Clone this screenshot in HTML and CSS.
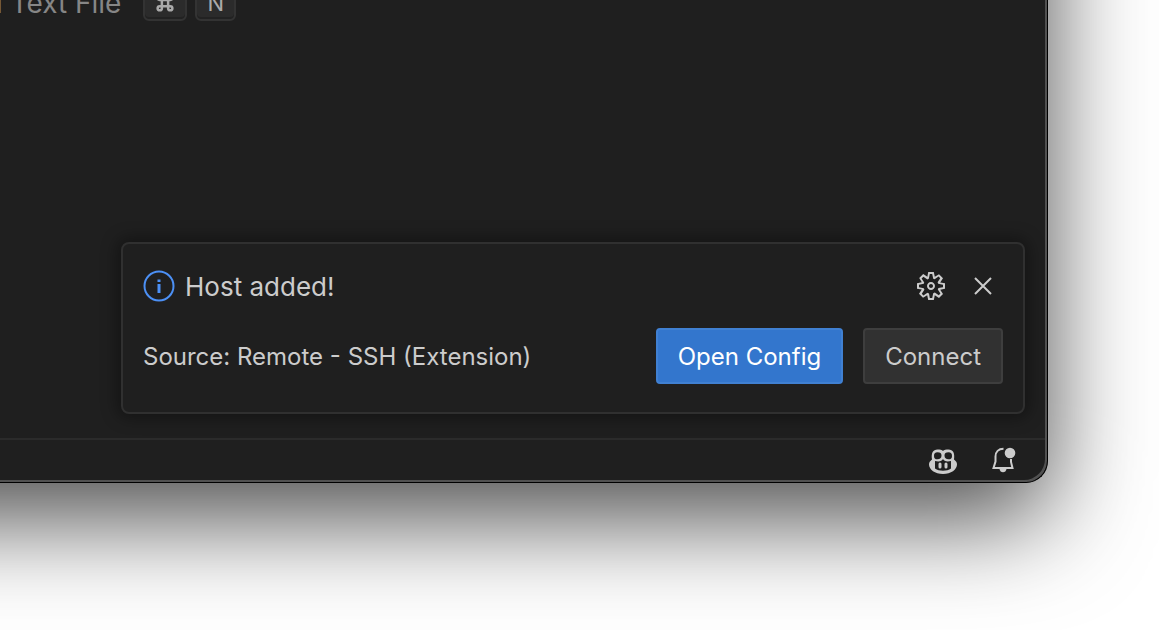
FILE: index.html
```html
<!DOCTYPE html>
<html lang="en">
<head>
<meta charset="utf-8">
<title>Host added</title>
<link rel="stylesheet" href="styles.css">
</head>
<body>
<div class="window">
  <main class="editor">
    <div class="shortcut">
      <span class="shortcut-label">New Untitled Text File</span>
      <kbd class="key"><svg width="20" height="20" viewBox="0 0 16 16" aria-label="Command"><path d="M5.500 5.500h5v5h-5zM5.500 5.500V3.800a1.700 1.700 0 1 0-1.700 1.700zM10.500 5.500V3.800a1.700 1.700 0 1 1 1.700 1.700zM5.500 10.500v1.700a1.700 1.700 0 1 1-1.700-1.700zM10.500 10.500v1.700a1.700 1.700 0 1 0 1.700-1.700z"/></svg></kbd>
      <kbd class="key">N</kbd>
    </div>
    <section class="toast" role="status">
      <div class="toast-row">
        <svg class="info" width="32" height="32" viewBox="0 0 32 32" aria-hidden="true"><circle cx="16" cy="16" r="14.500"/><path d="M14.500 9.500h3v2.500h-3zM14.500 14h3v9h-3z"/></svg>
        <span class="message">Host added!</span>
        <button class="icon-button" aria-label="Configure notification"><svg width="32" height="32" viewBox="0 0 16 16"><path fill-rule="evenodd" d="M9.100 4.400L8.600 2H7.400l-.5 2.400-.7.3-2-1.300-.9.8 1.300 2-.2.7-2.400.5v1.200l2.400.5.3.8-1.300 2 .8.8 2-1.300.8.3.4 2.300h1.200l.5-2.400.8-.3 2 1.300.8-.8-1.300-2 .3-.8 2.300-.4V7.400l-2.400-.5-.3-.8 1.300-2-.8-.8-2 1.300-.7-.2zM9.400 1l.5 2.400L12 2.100l2 2-1.400 2.100 2.400.4v2.800l-2.400.5L14 12l-2 2-2.100-1.400-.5 2.400H6.600l-.5-2.400L4 13.900l-2-2 1.400-2.100L1 9.400V6.600l2.400-.5L2.100 4l2-2 2.100 1.400.4-2.400h2.800zm.6 7c0 1.100-.9 2-2 2s-2-.9-2-2 .9-2 2-2 2 .9 2 2zM8 9c.6 0 1-.4 1-1s-.4-1-1-1-1 .4-1 1 .4 1 1 1z"/></svg></button>
        <button class="icon-button" aria-label="Close"><svg width="32" height="32" viewBox="0 0 32 32"><path class="line" d="M8 8l16 16M24 8L8 24"/></svg></button>
      </div>
      <div class="toast-row actions">
        <span class="source">Source: Remote - SSH (Extension)</span>
        <button class="button primary">Open Config</button>
        <button class="button">Connect</button>
      </div>
    </section>
  </main>
  <footer class="statusbar">
    <button class="icon-button" aria-label="Copilot"><svg width="32" height="32" viewBox="0 0 32 32"><path fill-rule="evenodd" d="M5 15.500C4 9 6 5.500 10.500 5.500c2.500 0 4.500.4 5.500 1.500 1-1.100 3-1.500 5.500-1.500C26 5.500 28 9 27 15.500c2 1.500 3 3 3 5 0 5-6 9.500-14 9.500S2 25.500 2 20.500c0-2 1-3.500 3-5zM8 17v7.500c4 3 12 3 16 0V17c-4 1-7 .3-8-2-1 2.300-4 3-8 2zM10.500 8.300c-2.500 0-3.500 1.200-3.500 3.700s1 3.300 3.500 3.300S14.500 14 14.500 11.500s-1.200-3.200-4-3.200zM21.500 8.300c2.500 0 3.500 1.200 3.500 3.700s-1 3.300-3.500 3.300-4-1.300-4-3.800 1.200-3.200 4-3.200z"/><path class="eyes" d="M13 20v3M19 20v3"/></svg></button>
    <button class="icon-button" aria-label="New notifications"><svg width="32" height="32" viewBox="0 0 32 32"><path class="line" d="M16.500 4.700c-5 0-8 3.200-8 7.800v5L6.500 24h19l-1.500-6v-3"/><path d="M12.500 25h7c-.3 2-1.700 3.300-3.500 3.300S12.800 27 12.500 25z"/><circle cx="23" cy="9" r="5.300"/></svg></button>
  </footer>
</div>
</body>
</html>
```
FILE: styles.css
```css
* { box-sizing: border-box; }

body {
  display: flex;
  flex-direction: column;
  height: 100vh;
  margin: 0;
  overflow: hidden;
  background: #fff;
  color: #ccc;
  font-family: Inter, "Liberation Sans", sans-serif;
}

/* The window runs past the top and left edges of the viewport. */
.window {
  display: flex;
  flex: 1;
  flex-direction: column;
  margin: -240px 111px 147px -240px;
  padding: 240px 0 0 240px;
  overflow: hidden;
  background: #1f1f1f;
  border: solid #000;
  border-width: 0 1px 1px 0;
  border-radius: 0 0 22px 0;
  box-shadow: inset -2px -2px #515151, 0 36px 100px rgba(0, 0, 0, 0.7);
}

.editor {
  display: flex;
  flex: 1;
  flex-direction: column;
  justify-content: space-between;
  padding: 0 22px 24px 121px;
}

.shortcut {
  display: flex;
  align-items: center;
  align-self: flex-start;
  justify-content: flex-end;
  width: 236px;
  height: 36px;
  margin: -15px 0 0 -121px;
  gap: 8px;
  white-space: nowrap;
}

.shortcut-label {
  margin-right: 14px;
  color: #868686;
  font-size: 28px;
}

.key {
  display: flex;
  align-items: center;
  justify-content: center;
  flex: none;
  min-width: 40px;
  height: 36px;
  padding: 0 10px;
  background: #2b2b2b;
  border: 2px solid #333;
  border-radius: 6px;
  box-shadow: inset 0 -2px #222;
  color: #aaa;
  font: 22px Inter, sans-serif;
}

.key svg {
  fill: none;
  stroke: #aaa;
  stroke-width: 2;
}

.toast {
  display: flex;
  flex-direction: column;
  gap: 26px;
  padding: 26px 20px 28px;
  border: 2px solid #303030;
  border-radius: 8px;
  box-shadow: 0 0 16px 4px rgba(0, 0, 0, 0.36);
  background: #1f1f1f;
}

.toast-row {
  display: flex;
  align-items: center;
  gap: 20px;
  height: 32px;
}

.info {
  margin-right: -10px;
  fill: #4c90f5;
}

.info circle {
  fill: none;
  stroke: #4c90f5;
  stroke-width: 2;
}

.message,
.source { flex: 1; }

.message { font-size: 26px; }
.source { font-size: 24px; }

.toast-row.actions { height: 56px; }

.icon-button {
  display: flex;
  padding: 0;
  background: none;
  border: 0;
}

.toast .icon-button:last-child { margin-right: 4px; }

.icon-button svg { fill: #ccc; }

.icon-button .line {
  fill: none;
  stroke: #ccc;
  stroke-width: 2;
}

.eyes {
  fill: none;
  stroke: #ccc;
  stroke-width: 3;
  stroke-linecap: round;
}

.button {
  height: 56px;
  padding: 0 20px;
  background: #313131;
  border: 2px solid #3e3e3e;
  border-radius: 4px;
  color: #ccc;
  font: 24px Inter, sans-serif;
}

.primary {
  background: #3376cd;
  border-color: #4080d2;
  color: #fff;
}

.statusbar {
  display: flex;
  justify-content: flex-end;
  align-items: center;
  gap: 28px;
  height: 42px;
  margin: 0 2px 2px -240px;
  padding-right: 26px;
  border-top: 2px solid #2b2b2b;
}
```
